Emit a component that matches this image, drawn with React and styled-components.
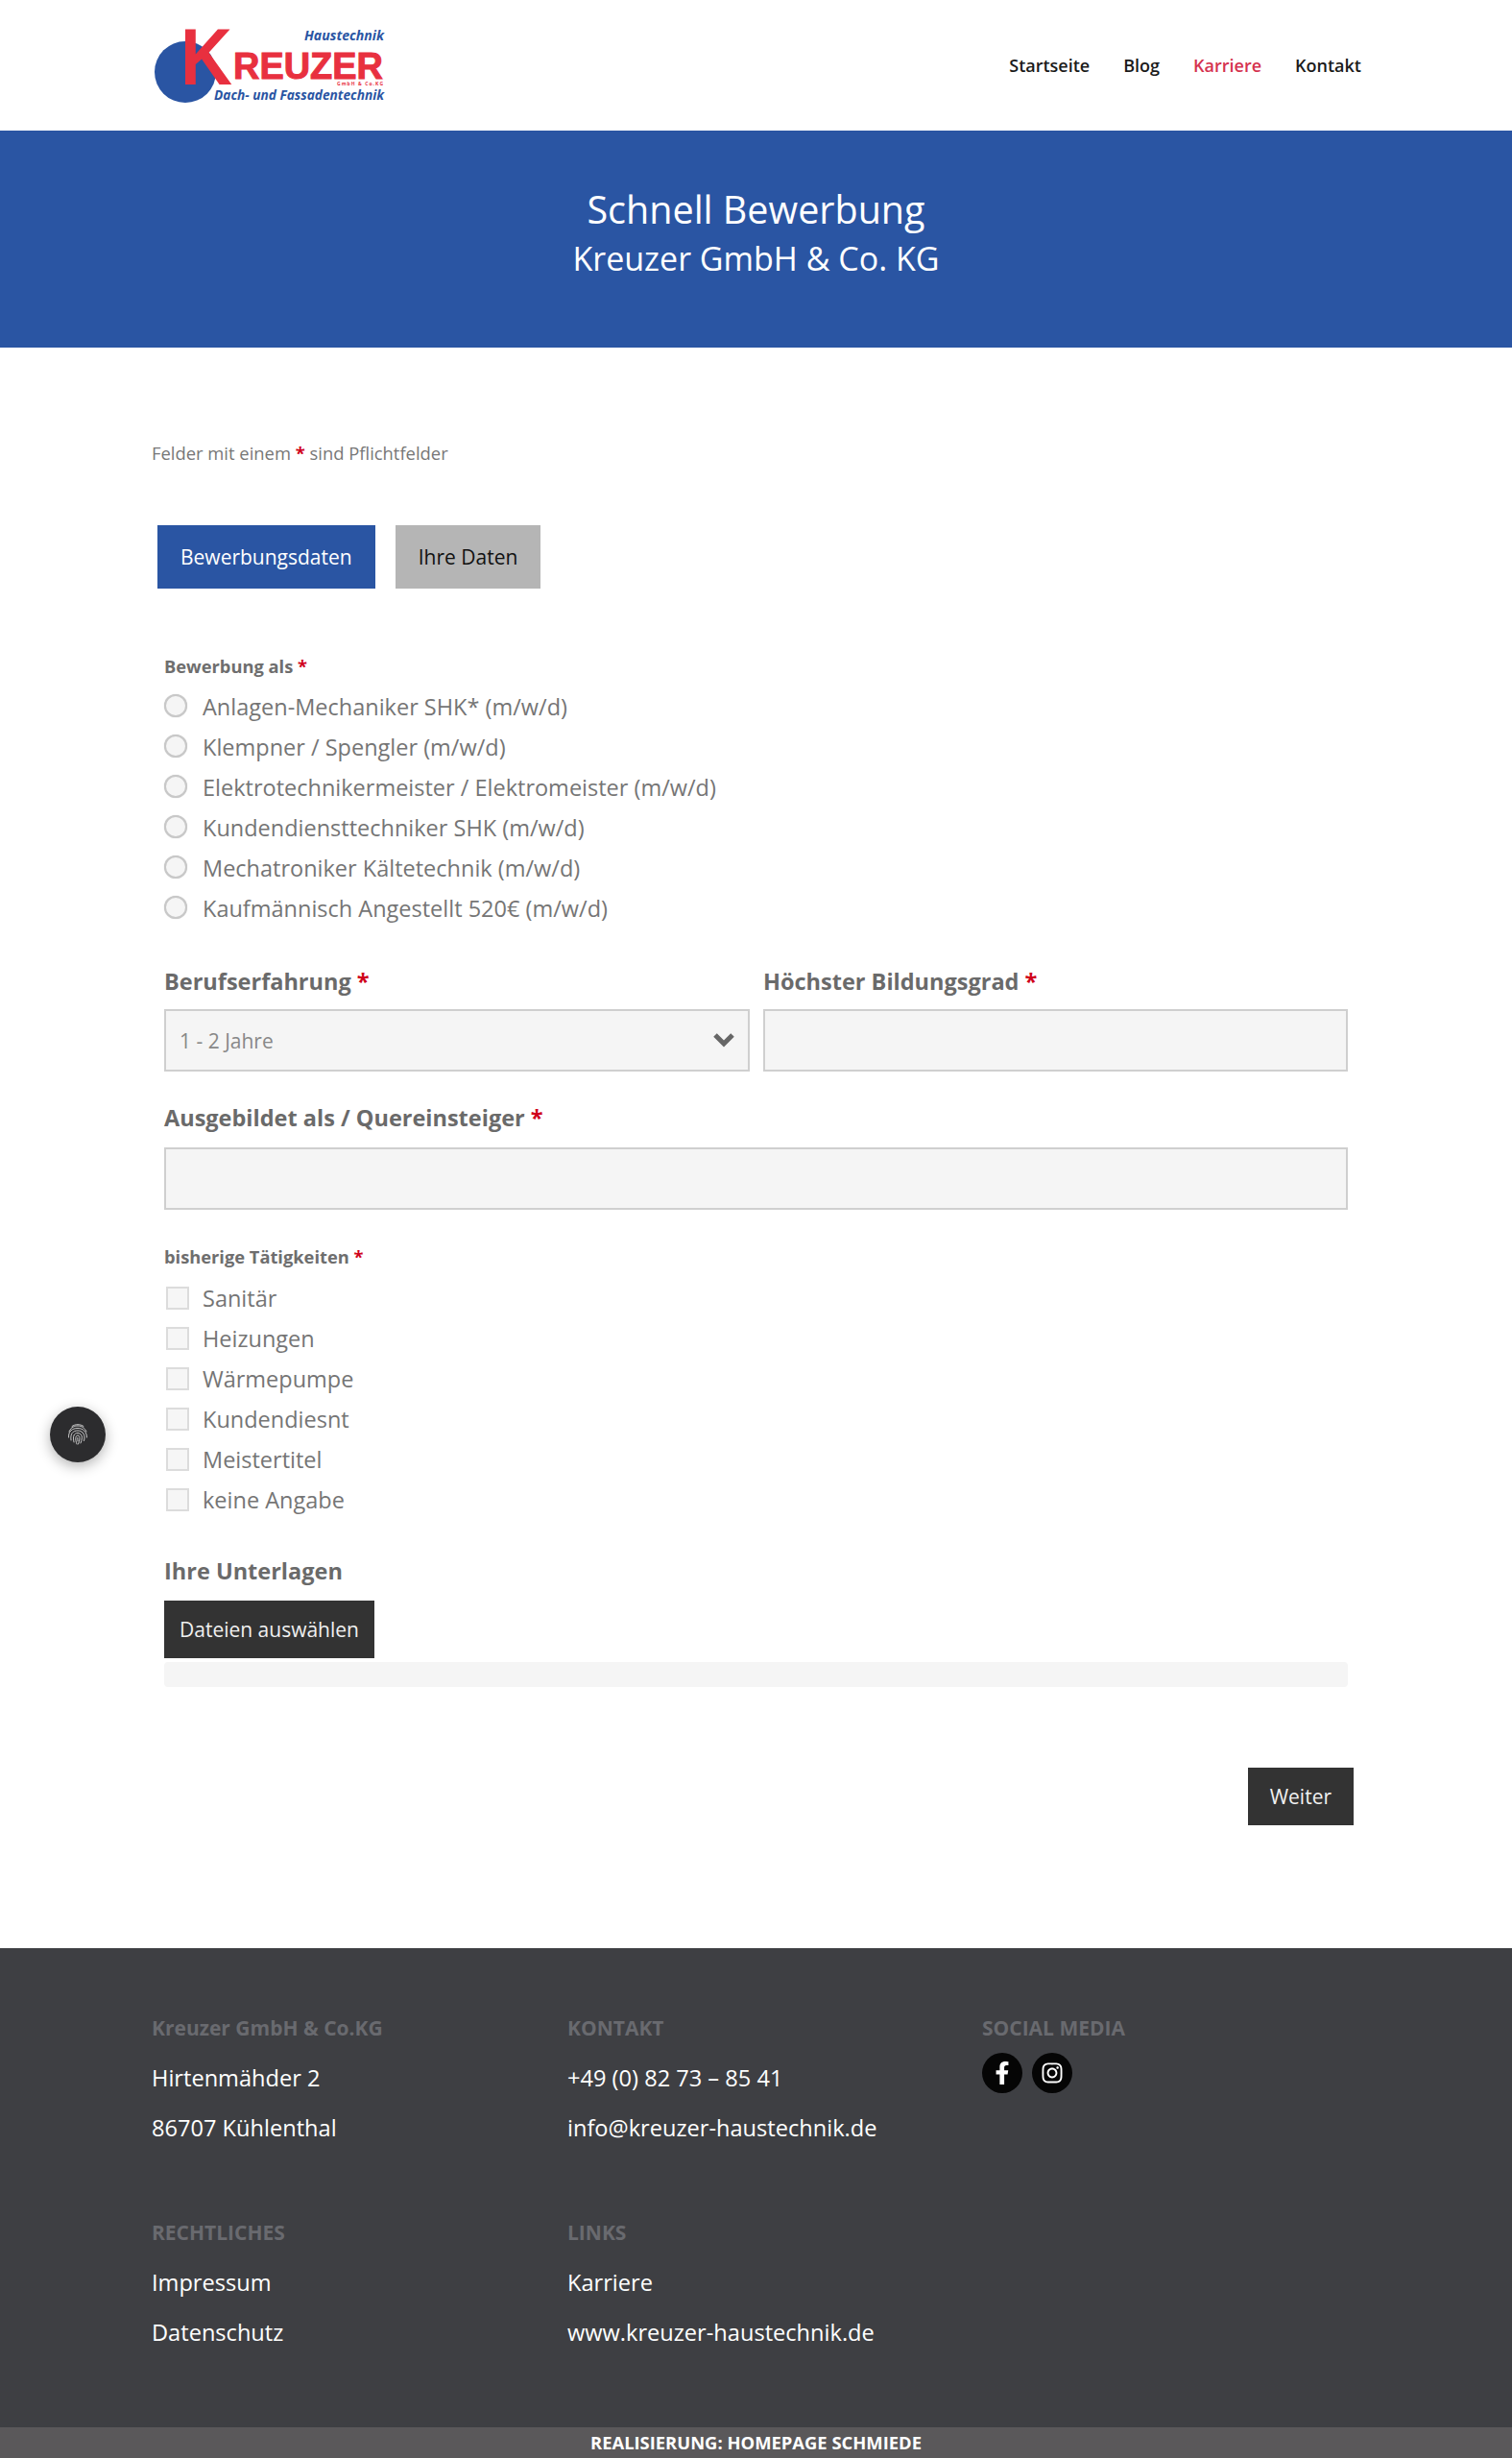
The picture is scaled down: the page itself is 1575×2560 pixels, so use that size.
import React from "react";
import styled, { createGlobalStyle } from "styled-components";
import { FaFacebookF, FaInstagram } from "react-icons/fa";

const GlobalStyle = createGlobalStyle`
  html, body {
    margin: 0;
    padding: 0;
    background: #fff;
    font-family: "Open Sans", "Liberation Sans", sans-serif;
    color: #6e6e6e;
  }
  * { box-sizing: border-box; }
`;

const Page = styled.div`
  position: relative;
  width: 100%;
`;

const Header = styled.header`
  height: 136px;
  padding: 0 157px 0 160px;
  display: flex;
  align-items: center;
  justify-content: space-between;
`;

const Nav = styled.nav`
  display: flex;
  gap: 35px;
`;

const NavLink = styled.a`
  font-size: 18px;
  font-weight: 600;
  color: ${(props) => (props.$active ? "#d5324f" : "#1a1a1a")};
`;

const Hero = styled.section`
  height: 226px;
  background: #2a55a3;
  color: #fff;
  text-align: center;
  padding-top: 56px;
`;

const HeroTitle = styled.div`
  font-size: 39.5px;
  line-height: 52px;
`;

const HeroSub = styled.div`
  font-size: 34px;
  line-height: 50px;
`;

const Main = styled.main`
  padding: 98px 165px 128px 158px;
`;

const Note = styled.p`
  margin: 0 0 63px;
  font-size: 18.4px;
  line-height: 24px;
  color: #777;
`;

const Star = styled.span`
  color: #d0021b;
  font-weight: 700;
`;

const Tabs = styled.div`
  display: flex;
  gap: 21px;
  margin: 0 0 69px 6px;
`;

const Tab = styled.button`
  height: 66px;
  padding: 0 24px;
  border: 0;
  font: inherit;
  font-size: 21px;
  color: ${(props) => (props.$active ? "#fff" : "#111")};
  background: ${(props) => (props.$active ? "#2a55a3" : "#b5b5b5")};
`;

const Form = styled.form`
  padding: 0 6px 0 13px;
`;

const SmallLabel = styled.div`
  font-size: 18.3px;
  font-weight: 700;
  line-height: 24px;
  margin-top: ${(props) => props.$top || 0}px;
`;

const OptionList = styled.div`
  margin-top: ${(props) => props.$top}px;
`;

const Option = styled.label`
  height: 42px;
  display: flex;
  align-items: center;
  gap: 16px;
  font-size: 23.5px;
  color: #757575;
`;

const Radio = styled.input.attrs({ type: "radio" })`
  appearance: none;
  width: 24px;
  height: 24px;
  margin: 0 0 2px;
  border-radius: 50%;
  border: 2px solid #c8c8c8;
  background: #f5f5f5;
  box-shadow: 0 0 1px rgba(0, 0, 0, 0.25);
`;

const Check = styled.input.attrs({ type: "checkbox" })`
  appearance: none;
  width: 24px;
  height: 24px;
  margin: 0 0 0 2px;
  flex: none;
  border: 2px solid #dcdcdc;
  background: #f6f6f6;
`;

const CheckOption = styled(Option)`
  gap: 14px;
`;

const BigLabel = styled.div`
  font-size: 23.5px;
  font-weight: 700;
  line-height: 32px;
  color: #6a6a6a;
  margin-bottom: ${(props) => props.$bottom}px;
`;

const TwoCols = styled.div`
  display: grid;
  grid-template-columns: 610px 609px;
  column-gap: 14px;
  margin-top: 39px;
`;

const Field = styled.div`
  margin-top: ${(props) => props.$top || 0}px;
`;

const SelectWrap = styled.div`
  position: relative;
`;

const Select = styled.select`
  appearance: none;
  display: block;
  width: 100%;
  height: 65px;
  padding: 0 14px;
  border: 2px solid #cfcfcf;
  border-radius: 0;
  background: #f5f5f5;
  color: #888;
  font: inherit;
  font-size: 21px;
`;

const Chevron = styled.svg`
  position: absolute;
  right: 15px;
  top: 23px;
  width: 24px;
  height: 18px;
  pointer-events: none;
`;

const TextInput = styled.input`
  display: block;
  width: 100%;
  height: 65px;
  border: 2px solid #cfcfcf;
  background: #f5f5f5;
`;

const DarkButton = styled.button`
  display: block;
  height: ${(props) => props.$h}px;
  padding: 0 ${(props) => props.$px}px;
  border: 0;
  background: #333;
  color: #f0f0f0;
  font: inherit;
  font-size: 21px;
`;

const FileBar = styled.div`
  height: 26px;
  margin-top: 4px;
  background: #f5f5f5;
  border-radius: 4px;
`;

const Actions = styled.div`
  display: flex;
  justify-content: flex-end;
  margin: 84px -6px 0 0;
`;

const Fab = styled.div`
  position: absolute;
  left: 52px;
  top: 1465px;
  width: 58px;
  height: 58px;
  border-radius: 50%;
  background: #2c2c2e;
  box-shadow: 0 4px 14px rgba(0, 0, 0, 0.3);
  display: flex;
  align-items: center;
  justify-content: center;
`;

const Footer = styled.footer`
  background: #3e3f43;
  padding: 69.5px 158px 72.5px;
  display: grid;
  grid-template-columns: 433px 432px 1fr;
  row-gap: 69px;
`;

const FooterHead = styled.div`
  font-size: 21px;
  font-weight: 700;
  line-height: 26px;
  color: #696a6f;
  margin-bottom: 13px;
`;

const FooterLine = styled.div`
  font-size: 23.6px;
  line-height: 52.5px;
  color: #fff;
`;

const Socials = styled.div`
  display: flex;
  gap: 10px;
  margin: 2px 0 0;
`;

const SocialBtn = styled.a`
  width: 42px;
  height: 42px;
  border-radius: 50%;
  background: #050505;
  color: #fff;
  font-size: 24px;
  display: flex;
  align-items: center;
  justify-content: center;
`;

const BottomBar = styled.div`
  height: 32px;
  background: #5a585a;
  color: #fff;
  font-size: 18.4px;
  font-weight: 700;
  line-height: 32px;
  text-align: center;
`;

const Logo = () => (
  <svg width="244" height="136" viewBox="160 0 244 136">
    <circle cx="193" cy="75" r="32" fill="#2a55a3" />
    <text x="188" y="88" fontFamily="Liberation Sans" fontWeight="700" fontSize="84" fill="#e8303f" textLength="54" lengthAdjust="spacingAndGlyphs">K</text>
    <text x="243" y="82" fontFamily="Liberation Sans" fontWeight="700" fontSize="38" fill="#e8303f" stroke="#e8303f" strokeWidth="1" textLength="156" lengthAdjust="spacingAndGlyphs">REUZER</text>
    <text x="317" y="42" fontFamily="Open Sans" fontStyle="italic" fontWeight="700" fontSize="14" fill="#2a55a3" textLength="83" lengthAdjust="spacingAndGlyphs">Haustechnik</text>
    <text x="351" y="89" fontFamily="Open Sans" fontWeight="700" fontSize="5" fill="#e8303f" textLength="48">GmbH &amp; Co.KG</text>
    <text x="223" y="104" fontFamily="Open Sans" fontStyle="italic" fontWeight="700" fontSize="14" fill="#2a55a3" textLength="177" lengthAdjust="spacingAndGlyphs">Dach- und Fassadentechnik</text>
  </svg>
);

const FingerprintIcon = () => (
  <svg width="22" height="24" viewBox="0 0 22 24" fill="none" stroke="#d8d8d8" strokeWidth="0.9" strokeLinecap="round">
    <path d="M5 3.5 C8 1 14 1 17 3.5" />
    <path d="M2 9 C4 4 8 3 11 3 C15 3 18 5 20 9" />
    <path d="M1.5 15 C1 9 5 5.5 11 5.5 C16 5.5 20.5 9 20.5 15" />
    <path d="M4 18 C3 11 6 8 11 8 C15 8 18 11 18 15 C18 16.5 17.8 17.5 17.5 18.5" />
    <path d="M7 20 C5.5 14 7 10.5 11 10.5 C14 10.5 15.6 13 15.4 15.5 C15.3 17.5 14.8 19.5 14 21" />
    <path d="M10 22 C8 17 8.5 13 11 13 C12.8 13 13.2 15 12.9 17 C12.7 18.7 12.2 20.5 11.5 22" />
    <path d="M10.8 15.5 C10.8 17 10.9 18 11 19" />
  </svg>
);

const Req = () => <Star>*</Star>;

const jobs = [
  "Anlagen-Mechaniker SHK* (m/w/d)",
  "Klempner / Spengler (m/w/d)",
  "Elektrotechnikermeister / Elektromeister (m/w/d)",
  "Kundendiensttechniker SHK (m/w/d)",
  "Mechatroniker Kältetechnik (m/w/d)",
  "Kaufmännisch Angestellt 520€ (m/w/d)",
];

const activities = ["Sanitär", "Heizungen", "Wärmepumpe", "Kundendiesnt", "Meistertitel", "keine Angabe"];

const App = () => {
  return (
    <Page>
      <GlobalStyle />
      <Header>
        <Logo />
        <Nav>
          <NavLink>Startseite</NavLink>
          <NavLink>Blog</NavLink>
          <NavLink $active>Karriere</NavLink>
          <NavLink>Kontakt</NavLink>
        </Nav>
      </Header>

      <Hero>
        <HeroTitle>Schnell Bewerbung</HeroTitle>
        <HeroSub>Kreuzer GmbH &amp; Co. KG</HeroSub>
      </Hero>

      <Main>
        <Note>
          Felder mit einem <Star>*</Star> sind Pflichtfelder
        </Note>
        <Tabs>
          <Tab type="button" $active>Bewerbungsdaten</Tab>
          <Tab type="button">Ihre Daten</Tab>
        </Tabs>

        <Form>
          <SmallLabel>
            Bewerbung als <Req />
          </SmallLabel>
          <OptionList $top={9}>
            {jobs.map((job) => (
              <Option key={job}>
                <Radio name="job" />
                {job}
              </Option>
            ))}
          </OptionList>

          <TwoCols>
            <Field>
              <BigLabel $bottom={13}>
                Berufserfahrung <Req />
              </BigLabel>
              <SelectWrap>
                <Select defaultValue="1 - 2 Jahre">
                  <option>1 - 2 Jahre</option>
                </Select>
                <Chevron viewBox="0 0 24 18">
                  <path d="M3 4 L12 13 L21 4" fill="none" stroke="#666" strokeWidth="5" />
                </Chevron>
              </SelectWrap>
            </Field>
            <Field>
              <BigLabel $bottom={13}>
                Höchster Bildungsgrad <Req />
              </BigLabel>
              <TextInput />
            </Field>
          </TwoCols>

          <Field $top={32}>
            <BigLabel $bottom={15}>
              Ausgebildet als / Quereinsteiger <Req />
            </BigLabel>
            <TextInput />
          </Field>

          <SmallLabel $top={37}>
            bisherige Tätigkeiten <Req />
          </SmallLabel>
          <OptionList $top={10}>
            {activities.map((item) => (
              <CheckOption key={item}>
                <Check />
                {item}
              </CheckOption>
            ))}
          </OptionList>

          <Field $top={37}>
            <BigLabel $bottom={15}>Ihre Unterlagen</BigLabel>
            <DarkButton type="button" $h={60} $px={16}>Dateien auswählen</DarkButton>
            <FileBar />
          </Field>

          <Actions>
            <DarkButton type="button" $h={60} $px={23}>Weiter</DarkButton>
          </Actions>
        </Form>
      </Main>

      <Fab>
        <FingerprintIcon />
      </Fab>

      <Footer>
        <div>
          <FooterHead>Kreuzer GmbH &amp; Co.KG</FooterHead>
          <FooterLine>Hirtenmähder 2</FooterLine>
          <FooterLine>86707 Kühlenthal</FooterLine>
        </div>
        <div>
          <FooterHead>KONTAKT</FooterHead>
          <FooterLine>+49 (0) 82 73 – 85 41</FooterLine>
          <FooterLine>info@kreuzer-haustechnik.de</FooterLine>
        </div>
        <div>
          <FooterHead>SOCIAL MEDIA</FooterHead>
          <Socials>
            <SocialBtn><FaFacebookF /></SocialBtn>
            <SocialBtn><FaInstagram /></SocialBtn>
          </Socials>
        </div>
        <div>
          <FooterHead>RECHTLICHES</FooterHead>
          <FooterLine>Impressum</FooterLine>
          <FooterLine>Datenschutz</FooterLine>
        </div>
        <div>
          <FooterHead>LINKS</FooterHead>
          <FooterLine>Karriere</FooterLine>
          <FooterLine>www.kreuzer-haustechnik.de</FooterLine>
        </div>
      </Footer>
      <BottomBar>REALISIERUNG: HOMEPAGE SCHMIEDE</BottomBar>
    </Page>
  );
};

export default App;
